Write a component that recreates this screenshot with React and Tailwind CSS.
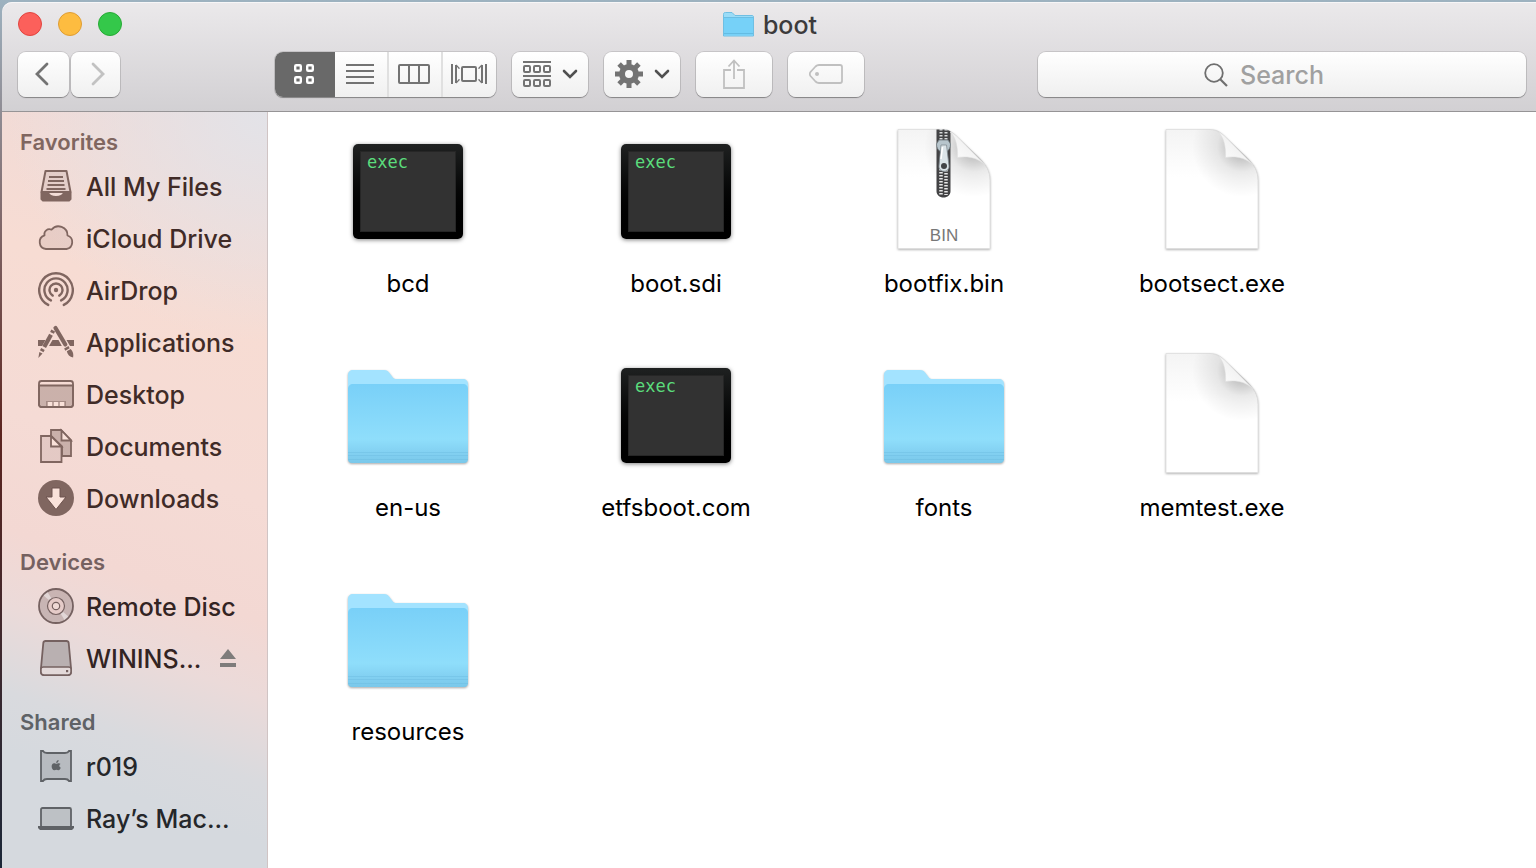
import React from 'react';

const AllFilesIcon = () => (
  <svg viewBox="0 0 36 36" className="w-9 h-9" fill="none" stroke="currentColor" strokeWidth="2">
    <path d="M7.5 3h21l4 21H3.5z" fill="currentColor" fillOpacity="0.12" strokeLinejoin="round" />
    <path d="M3.5 24.5H10c1 3.5 3.5 4.5 8 4.500s7-1 8-4.500h6.500V31L31 32.500H5L3.500 31z" fill="currentColor" strokeLinejoin="round" />
    <path d="M11 9h14M10 13h16M9.500 17h17M8.500 21h19" />
  </svg>
);

const CloudIcon = () => (
  <svg viewBox="0 0 36 36" className="w-9 h-9" fill="currentColor" fillOpacity="0.12" stroke="currentColor" strokeWidth="1.8">
    <path d="M8 29A7 7 0 0 1 6.500 15.400A5 5 0 0 1 13.500 9.700A9 9 0 0 1 29.500 15.500A7 7 0 0 1 28.500 29Z" strokeLinejoin="round" />
  </svg>
);

const AirDropIcon = () => (
  <svg viewBox="0 0 36 36" className="w-9 h-9" fill="none" stroke="currentColor" strokeWidth="2.4" strokeLinecap="round">
    <path d="M10.200 32.900A16.800 16.800 0 1 1 25.800 32.900M12.900 28.400A11.600 11.600 0 1 1 23.100 28.400M14.700 23.600A6.500 6.500 0 1 1 21.300 23.600" />
    <circle cx="18" cy="18" r="2.2" fill="currentColor" stroke="none" />
  </svg>
);

const ApplicationsIcon = () => (
  <svg viewBox="0 0 36 36" className="w-9 h-9" fill="currentColor" stroke="currentColor">
    <path d="M0 16h7.500l-3.400 6H0zM14.500 16h6l3.300 6H11zM28.500 16H36v6h-4z" stroke="none" />
    <path d="M17.500 4L27.300 20.500" strokeWidth="4.200" strokeLinecap="round" />
    <path d="M28.300 23.300l1.200 2.100" strokeWidth="5" />
    <path d="M28.800 27.200l3.900-2.200c2.500 2.400 3 5.200 2.400 8.600-3.400-.8-5.600-2.900-6.300-6.400z" stroke="none" />
    <path d="M15.200 6.500L14 8.900" strokeWidth="4.200" />
    <path d="M13 10.800L6.200 23" strokeWidth="4.200" />
    <path d="M5 25l-1.300 2.300" strokeWidth="4" />
    <path d="M1.400 28l3.100 1.600L.3 34z" stroke="none" />
  </svg>
);

const DesktopIcon = () => (
  <svg viewBox="0 0 36 36" className="w-9 h-9" fill="none" stroke="currentColor" strokeWidth="1.8">
    <rect x="1" y="5" width="34" height="26" rx="2.5" />
    <path d="M1 9.500h34v19a2.500 2.500 0 0 1-2.500 2.500h-29A2.500 2.500 0 0 1 1 28.500z" fill="currentColor" fillOpacity="0.36" />
    <path d="M8 25h20v6H8z" fill="currentColor" fillOpacity="0.5" stroke="none" />
    <path d="M9.700 26h4.600v4H9.700zM15.700 26h4.600v4h-4.600zM21.700 26h4.600v4h-4.600z" fill="#fae2da" stroke="none" />
  </svg>
);

const DocumentsIcon = () => (
  <svg viewBox="0 0 36 36" className="w-9 h-9" fill="none" stroke="currentColor" strokeWidth="1.8">
    <path d="M13 8V2h10l10 10v16h-9V18.500z" fill="currentColor" fillOpacity="0.36" />
    <path d="M23.500 2.500V12.500H33z" fill="#fae2da" />
    <path d="M3 8h10l10.500 10.500V34H3z" fill="currentColor" fillOpacity="0.14" />
    <path d="M13 8v10.500h10.500z" fill="#fae2da" />
  </svg>
);

const DownloadsIcon = () => (
  <svg viewBox="0 0 36 36" className="w-9 h-9">
    <circle cx="18" cy="18" r="18" fill="currentColor" />
    <path d="M14 8h8v9h6L18 29.500 8 17h6z" fill="#fae2da" stroke="#6d534e" strokeWidth="1" />
  </svg>
);

const DiscIcon = () => (
  <svg viewBox="0 0 36 36" className="w-9 h-9" fill="none" stroke="currentColor">
    <circle cx="18" cy="18" r="17" fill="currentColor" fillOpacity="0.3" strokeWidth="1.8" />
    <path d="M18 18L5.500 7.500 9.500 4zM18 18l12.500 10.500-4 3.500z" fill="#fff" fillOpacity="0.45" stroke="none" />
    <circle cx="18" cy="18" r="8.500" fill="#e5cbc8" strokeWidth="1.2" />
    <circle cx="18" cy="18" r="3.700" fill="#efd9d5" strokeWidth="1.2" />
  </svg>
);

const DriveIcon = () => (
  <svg viewBox="0 0 36 36" className="w-9 h-9" fill="none" stroke="currentColor" strokeWidth="1.8">
    <path d="M7.500 1h21c1.500 0 2 .8 2.200 2L33 28v4c0 2-1 3-3 3H6c-2 0-3-1-3-3v-4L5.300 3c.2-1.200.7-2 2.200-2z" fill="#b9b0b1" />
    <path d="M3 29c0-1.500.8-2 2.500-2h25c1.700 0 2.500.5 2.500 2v3c0 2-1 3-3 3H6c-2 0-3-1-3-3z" fill="#e3d9d9" strokeWidth="1.5" />
    <rect x="28" y="30" width="2.200" height="2.200" fill="currentColor" stroke="none" />
  </svg>
);

const MacProIcon = () => (
  <svg viewBox="0 0 36 36" className="w-9 h-9">
    <path d="M3 3h2c.8 1.600 2 2 4 2h18c2 0 3.200-.4 4-2h2v30h-2c-.8-1.600-2-2-4-2H9c-2 0-3.200.4-4 2H3z" fill="currentColor" fillOpacity="0.25" stroke="currentColor" strokeWidth="1.8" />
    <path d="M20.800 15.200c-1 0-1.700.6-2.400.6s-1.400-.6-2.300-.6c-3.600.3-3 7 .3 7 .8 0 1.200-.4 2-.4s1.200.4 2 .4c1.100 0 2-1.400 2.400-2.500-2-.9-1.900-3-.2-3.700-.5-.5-1.100-.8-1.800-.8zM18.200 15c0-1.700 1-2.700 2.400-3 .1 1.700-.9 2.900-2.400 3z" fill="currentColor" />
  </svg>
);

const LaptopIcon = () => (
  <svg viewBox="0 0 36 36" className="w-9 h-9">
    <rect x="3" y="8" width="30" height="19" rx="1.500" fill="currentColor" fillOpacity="0.2" stroke="currentColor" strokeWidth="1.8" />
    <path d="M0 26h36v2l-2 2H2l-2-2z" fill="currentColor" />
  </svg>
);

const FolderIcon = ({ id }) => (
  <svg viewBox="0 0 120 120" className="w-[120px] h-[120px] overflow-visible">
    <defs>
      <linearGradient id={id} x1="0" y1="0" x2="0" y2="1">
        <stop offset="0" stopColor="#79d0f8" />
        <stop offset="0.7" stopColor="#8fdefb" />
        <stop offset="0.86" stopColor="#83d1f2" />
        <stop offset="1" stopColor="#7ac8ea" />
      </linearGradient>
    </defs>
    <g className="drop-shadow-[0_1px_1px_rgba(0,0,0,0.35)]">
      <path d="M0 38V22c0-3 2-5 5-5h31c3 0 4 1 5.500 3l3 4c1 1.500 2 2 4 2H115c3 0 5 2 5 5v8z" fill="#a3e3ff" />
      <path d="M0 36c0-3 2-5 5-5h110c3 0 5 2 5 5v70c0 2.500-1.500 4-4 4H4c-2.500 0-4-1.500-4-4z" fill={`url(#${id})`} />
    </g>
    <path d="M0 99.500h120M0 102.500h120M0 106.500h120" stroke="#69b9df" strokeOpacity="0.4" />
  </svg>
);

const ExecIcon = () => (
  <div className="w-[110px] h-[95px] mt-[5px] p-[7px] rounded-[5px] bg-linear-to-b from-[#1f2121] to-black shadow-[0_1px_4px_rgba(0,0,0,0.5)]">
    <div className="h-full px-[6px] bg-[#323232] border border-[#262626] text-[#5bdc7c] text-[17px] leading-5 font-['DejaVu_Sans_Mono',monospace]">
      exec
    </div>
  </div>
);

const PageIcon = ({ id, children }) => (
  <svg viewBox="0 0 120 120" className="w-[120px] h-[120px] overflow-visible">
    <defs>
      <linearGradient id={`${id}-page`} x1="0" y1="0" x2="0" y2="1">
        <stop offset="0" stopColor="#f4f4f4" />
        <stop offset="0.4" stopColor="#fff" />
      </linearGradient>
      <radialGradient id={`${id}-shade`} gradientUnits="userSpaceOnUse" cx="90" cy="18" r="50">
        <stop offset="0.25" stopColor="#000" stopOpacity="0.2" />
        <stop offset="0.5" stopColor="#000" stopOpacity="0.08" />
        <stop offset="1" stopColor="#000" stopOpacity="0" />
      </radialGradient>
      <linearGradient id={`${id}-curl`} x1="0" y1="1" x2="0.6" y2="0.4">
        <stop offset="0" stopColor="#fff" />
        <stop offset="1" stopColor="#f1f1f1" />
      </linearGradient>
    </defs>
    <g className="drop-shadow-[0_1px_1px_rgba(0,0,0,0.3)]">
      <path d="M14 .5h44c8 0 12 4 17 9l20 19c7 7 11 13 11 23v68H14z" fill={`url(#${id}-page)`} stroke="#dedede" strokeWidth="0.8" />
    </g>
    <path d="M14 .5h44c8 0 12 4 17 9l20 19c7 7 11 13 11 23v68H14z" fill={`url(#${id}-shade)`} />
    {children}
    <path d="M66 3c6 5 8 15 7.500 25.500C83 27 93 28 101 36L75 9.500c-3-3-6-5.500-9-6.500z" fill={`url(#${id}-curl)`} stroke="#dcdcdc" strokeWidth="0.5" />
  </svg>
);

const Zipper = () => (
  <>
    <path d="M52.500 .5h8c3 .5 4.500 1 6 2V62c0 4-3 6.500-7 6.500s-7-2.500-7-6.500z" fill="#434345" />
    <path d="M57 0v14M62 0v14" stroke="#d8dadb" strokeWidth="3" strokeDasharray="1.5 1.5" />
    <path d="M57 40v26M62 41v25" stroke="#e8e8e8" strokeWidth="3.5" strokeDasharray="1.5 1.5" />
    <path d="M55 11h9l2.500 4c0 4-2 6.500-4 7.500h-6c-2-1-4-3.500-4-7.500z" fill="#b7c5cc" stroke="#717c82" strokeWidth="0.8" />
    <path d="M57 16h5.500L65 37c.5 7-10.500 7-10 0z" fill="#dbe4e8" stroke="#818c92" strokeWidth="0.8" />
    <path d="M58.500 18L57 30" stroke="#fff" strokeWidth="1.5" />
    <circle cx="60" cy="37" r="3" fill="#424547" />
  </>
);

const BinIcon = () => (
  <PageIcon id="bin">
    <Zipper />
    <text x="60" y="112" textAnchor="middle" className="fill-[#777] text-[17px] font-['Liberation_Sans',sans-serif]">BIN</text>
  </PageIcon>
);

const GridIcon = () => (
  <svg viewBox="0 0 20 20" className="w-5 h-5" fill="none" stroke="currentColor" strokeWidth="2.4">
    <rect x="1.200" y="1.200" width="5.600" height="5.600" rx="1" />
    <rect x="13.200" y="1.200" width="5.600" height="5.600" rx="1" />
    <rect x="1.200" y="13.200" width="5.600" height="5.600" rx="1" />
    <rect x="13.200" y="13.200" width="5.600" height="5.600" rx="1" />
  </svg>
);

const ListIcon = () => (
  <svg viewBox="0 0 28 20" className="w-7 h-5" stroke="currentColor" strokeWidth="2">
    <path d="M0 1h28M0 7h28M0 13h28M0 19h28" />
  </svg>
);

const ColumnsIcon = () => (
  <svg viewBox="0 0 32 20" className="w-8 h-5" fill="none" stroke="currentColor" strokeWidth="2">
    <rect x="1" y="1" width="30" height="18" rx="1" />
    <path d="M11 1v18M21 1v18" />
  </svg>
);

const CoverFlowIcon = () => (
  <svg viewBox="0 0 36 20" className="w-9 h-5" fill="none" stroke="currentColor" strokeWidth="2">
    <path d="M1 0v20M35 0v20M5 1v18M31 1v18" />
    <path d="M5 1l3 3v1M5 19l3-3v-1M31 1l-3 3v1M31 19l-3-3v-1" strokeWidth="1.2" />
    <rect x="11" y="3" width="14" height="14" rx="1" />
  </svg>
);

const ArrangeIcon = () => (
  <svg viewBox="0 0 28 26" className="w-7 h-[26px]" fill="none" stroke="currentColor" strokeWidth="2">
    <path d="M0 1h28M0 15h28" />
    <rect x="1" y="5" width="6" height="6" rx="1" />
    <rect x="11" y="5" width="6" height="6" rx="1" />
    <rect x="21" y="5" width="6" height="6" rx="1" />
    <rect x="1" y="19" width="6" height="6" rx="1" />
    <rect x="11" y="19" width="6" height="6" rx="1" />
    <rect x="21" y="19" width="6" height="6" rx="1" />
  </svg>
);

const GearIcon = () => (
  <svg viewBox="0 0 28 28" className="w-7 h-7" fill="none" stroke="currentColor">
    <circle cx="14" cy="14" r="7" strokeWidth="6" />
    <path d="M14 0v6M14 22v6M0 14h6M22 14h6M4.100 4.100l4.200 4.200M19.700 19.700l4.200 4.200M4.100 23.900l4.200-4.200M19.700 8.300l4.200-4.200" strokeWidth="5" />
  </svg>
);

const Chevron = () => (
  <svg viewBox="0 0 16 10" className="w-4 h-[10px]" fill="none" stroke="#505050" strokeWidth="2.6" strokeLinecap="round">
    <path d="M2 2l6 6 6-6" />
  </svg>
);

const ShareIcon = () => (
  <svg viewBox="0 0 22 30" className="w-[22px] h-[30px]" fill="none" stroke="currentColor" strokeWidth="1.8">
    <path d="M8 11H1v18h20V11h-7M11 20V2M5.500 7.500L11 1.500l5.500 6" />
  </svg>
);

const TagIcon = () => (
  <svg viewBox="0 0 34 20" className="w-[34px] h-5" fill="none" stroke="currentColor" strokeWidth="1.8">
    <path d="M10 1h21c1.300 0 2 .7 2 2v14c0 1.300-.7 2-2 2H10c-1.500 0-2.500-.5-3.500-1.500L1.500 12c-1-1.400-1-2.600 0-4l5-5.500C7.500 1.500 8.500 1 10 1z" />
    <circle cx="8" cy="10" r="2" fill="currentColor" stroke="none" />
  </svg>
);

const ToolButton = ({ label, className = '', children }) => (
  <button
    type="button"
    aria-label={label}
    className={`h-[45px] pb-[2px] flex items-center justify-center rounded-lg bg-linear-to-b from-white to-[#f0f0f0] shadow-[0_0_0_1px_rgba(0,0,0,0.11),0_1px_1px_rgba(0,0,0,0.3)] ${className}`}
  >
    {children}
  </button>
);

const sections = [
  {
    title: 'Favorites',
    tone: 'text-[#806660]',
    textTone: 'text-[#402b27]',
    items: [
      { name: 'All My Files', icon: <AllFilesIcon /> },
      { name: 'iCloud Drive', icon: <CloudIcon /> },
      { name: 'AirDrop', icon: <AirDropIcon /> },
      { name: 'Applications', icon: <ApplicationsIcon /> },
      { name: 'Desktop', icon: <DesktopIcon /> },
      { name: 'Documents', icon: <DocumentsIcon /> },
      { name: 'Downloads', icon: <DownloadsIcon /> },
    ],
  },
  {
    title: 'Devices',
    tone: 'text-[#756160]',
    textTone: 'text-[#332423]',
    items: [
      { name: 'Remote Disc', icon: <DiscIcon /> },
      { name: 'WININS...', icon: <DriveIcon />, ejectable: true },
    ],
  },
  {
    title: 'Shared',
    tone: 'text-[#5f6266]',
    textTone: 'text-[#25272a]',
    items: [
      { name: 'r019', icon: <MacProIcon /> },
      { name: 'Ray’s Mac...', icon: <LaptopIcon /> },
    ],
  },
];

const files = [
  { name: 'bcd', icon: <ExecIcon /> },
  { name: 'boot.sdi', icon: <ExecIcon /> },
  { name: 'bootfix.bin', icon: <BinIcon /> },
  { name: 'bootsect.exe', icon: <PageIcon id="bootsect" /> },
  { name: 'en-us', icon: <FolderIcon id="en-us" /> },
  { name: 'etfsboot.com', icon: <ExecIcon /> },
  { name: 'fonts', icon: <FolderIcon id="fonts" /> },
  { name: 'memtest.exe', icon: <PageIcon id="memtest" /> },
  { name: 'resources', icon: <FolderIcon id="resources" /> },
];

const Toolbar = () => (
  <header className="pb-[14px] pr-[10px] pl-4 bg-linear-to-b from-[#ebe9eb] to-[#d2d0d3] border-b border-[#969496] rounded-tl-[10px] shadow-[inset_0_1px_0_#f7f6f7]">
    <div className="h-11 mb-[6px] grid grid-cols-[1fr_auto_1fr] items-center">
      <div className="flex gap-4">
        <button type="button" aria-label="Close" className="w-6 h-6 rounded-full bg-[#fc605b] border border-[#e2443f]" />
        <button type="button" aria-label="Minimize" className="w-6 h-6 rounded-full bg-[#fdbc40] border border-[#df9d34]" />
        <button type="button" aria-label="Zoom" className="w-6 h-6 rounded-full bg-[#34c84a] border border-[#27aa35]" />
      </div>
      <h1 className="pr-1 flex items-center gap-[9px] text-[25px] leading-8 font-medium text-[#3c3b3c]">
        <svg viewBox="0 0 31 25" className="w-[31px] h-[25px]">
          <path d="M.5 24V2.500C.5 1 1 .5 2.500.5H9l3 3h17c1 0 1.500.5 1.500 1.500v19z" fill="#9bdcf7" stroke="#6fbfe3" />
          <path d="M1 6h29v17.500H1z" fill="#76d1f8" />
          <path d="M1 5.500h29M1 21.500h29" stroke="#5fb6dd" strokeWidth="0.8" />
        </svg>
        <span className="pt-[2px]">boot</span>
      </h1>
    </div>
    <div className="flex items-center">
      <div className="flex gap-[2px]">
        <ToolButton label="Back" className="w-[51px] text-[#737373]">
          <svg viewBox="0 0 14 24" className="w-[14px] h-6 mr-1" fill="none" stroke="currentColor" strokeWidth="2.8" strokeLinecap="round">
            <path d="M12 2L2 12l10 10" />
          </svg>
        </ToolButton>
        <ToolButton label="Forward" className="w-[49px] text-[#c2c2c2]">
          <svg viewBox="0 0 14 24" className="w-[14px] h-6 ml-1" fill="none" stroke="currentColor" strokeWidth="2.8" strokeLinecap="round">
            <path d="M2 2l10 10L2 22" />
          </svg>
        </ToolButton>
      </div>

      <div className="ml-[155px] h-[45px] flex rounded-lg overflow-hidden bg-linear-to-b from-white to-[#f0f0f0] text-[#737373] shadow-[0_0_0_1px_rgba(0,0,0,0.11),0_1px_1px_rgba(0,0,0,0.3)]">
        <button type="button" aria-label="Icon view" aria-pressed="true" className="w-[60px] pr-[2px] pb-[2px] flex items-center justify-center bg-[#696969] text-white">
          <GridIcon />
        </button>
        <button type="button" aria-label="List view" className="w-[52px] pr-[2px] pb-[2px] flex items-center justify-center">
          <ListIcon />
        </button>
        <button type="button" aria-label="Column view" className="w-[54px] pr-[2px] pb-[2px] flex items-center justify-center border-l-2 border-[#e0e0e0]">
          <ColumnsIcon />
        </button>
        <button type="button" aria-label="Cover flow view" className="w-[55px] pr-[2px] pb-[2px] flex items-center justify-center border-l-2 border-[#e0e0e0]">
          <CoverFlowIcon />
        </button>
      </div>

      <div className="ml-4 flex gap-4 text-[#737373]">
        <ToolButton label="Arrange" className="w-[76px] gap-[11px]">
          <ArrangeIcon />
          <Chevron />
        </ToolButton>
        <ToolButton label="Actions" className="w-[76px] gap-[11px]">
          <GearIcon />
          <Chevron />
        </ToolButton>
        <ToolButton label="Share" className="w-[76px] text-[#c0c0c0]">
          <ShareIcon />
        </ToolButton>
        <ToolButton label="Tags" className="w-[76px] text-[#c0c0c0]">
          <TagIcon />
        </ToolButton>
      </div>

      <label className="ml-[174px] h-[45px] flex-1 flex items-center justify-center gap-3 rounded-lg bg-linear-to-b from-white to-[#efefef] shadow-[0_0_0_1px_rgba(0,0,0,0.11),0_1px_1px_rgba(0,0,0,0.3)]">
        <svg viewBox="0 0 24 24" className="w-6 h-6" fill="none" stroke="#6f6f6f" strokeWidth="1.8">
          <circle cx="10" cy="10" r="8.800" />
          <path d="M16 16l7 7" strokeWidth="2.2" />
        </svg>
        <input type="search" aria-label="Search" placeholder="Search" className="w-[120px] text-[25px] leading-8 font-medium outline-none placeholder:text-[#a0a0a0]" />
      </label>
    </div>
  </header>
);

const Sidebar = () => (
  <nav className="w-[266px] shrink-0 pt-[10px] border-r border-[#d0c4c4] bg-[radial-gradient(ellipse_260px_230px_at_100%_0%,#e3e3e8_0%,rgba(227,227,232,0)_100%),linear-gradient(200deg,#eedad8_0%,#f7dcd3_26%,#f5dbd5_46%,#f3d8d3_60%,#ebdad9_69%,#d9dade_79%,#d5d9de_86%)]">
    {sections.map(section => (
      <section key={section.title} className="mb-[18px]">
        <h2 className={`h-[38px] pl-[18px] pt-[2px] flex items-center text-[22px] leading-7 font-semibold ${section.tone}`}>{section.title}</h2>
        <ul>
          {section.items.map(item => (
            <li key={item.name} className="h-[52px] pl-9 pr-[31px] flex items-center">
              <a href="#" className="flex items-center gap-3">
                <span className={section.tone}>{item.icon}</span>
                <span className={`pt-[2px] text-[25px] leading-8 font-medium ${section.textTone}`}>{item.name}</span>
              </a>
              {item.ejectable && (
                <button type="button" aria-label="Eject" className="ml-auto text-[#7e7c7b]">
                  <svg viewBox="0 0 16 18" className="w-4 h-[18px]" fill="currentColor">
                    <path d="M8 0l8 10H0zM0 14h16v4H0z" />
                  </svg>
                </button>
              )}
            </li>
          ))}
        </ul>
      </section>
    ))}
  </nav>
);

const App = () => (
  <div className="min-h-screen flex flex-col pl-[2px] pt-[2px] bg-linear-to-b from-[#9db2c0] via-[#5c2420] to-[#1b2738] font-[Inter,sans-serif]">
    <Toolbar />
    <div className="flex flex-1">
      <Sidebar />
      <main className="flex-1 pl-[6px] pt-[17px] bg-white">
        <ul className="grid grid-cols-[repeat(auto-fill,268px)]">
          {files.map(file => (
            <li key={file.name} className="h-56 flex flex-col items-center">
              <div className="h-[120px] flex items-center">{file.icon}</div>
              <span className="mt-[19px] text-[24px] leading-8 text-black">{file.name}</span>
            </li>
          ))}
        </ul>
      </main>
    </div>
  </div>
);

export default App;
